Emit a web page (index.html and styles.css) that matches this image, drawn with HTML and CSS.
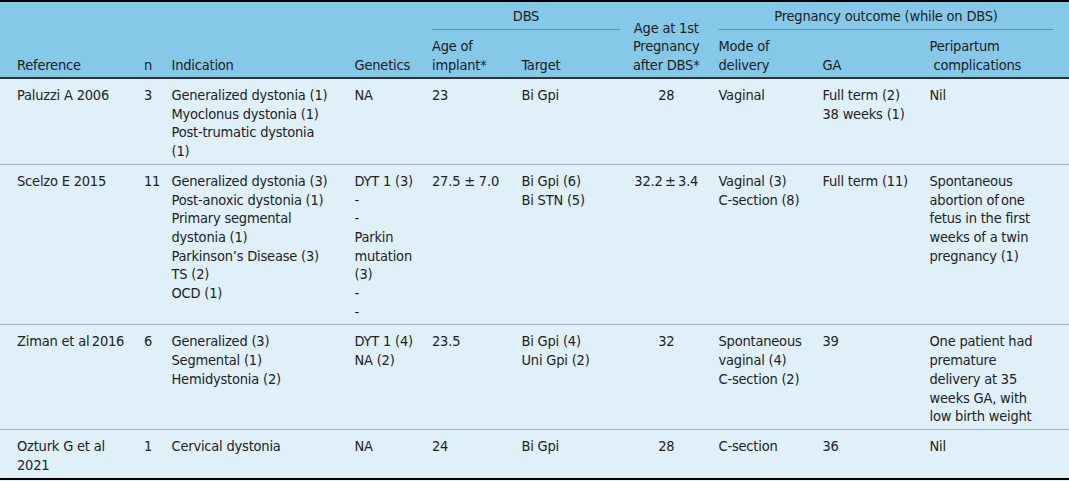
FILE: index.html
```html
<!DOCTYPE html>
<html lang="en">
<head>
<meta charset="utf-8">
<title>DBS and pregnancy</title>
<link rel="stylesheet" href="styles.css">
</head>
<body>
<table class="tbl">
  <colgroup>
    <col class="w-ref">
    <col class="w-n">
    <col class="w-ind">
    <col class="w-gen">
    <col class="w-age">
    <col class="w-tgt">
    <col class="w-preg">
    <col class="w-mode">
    <col class="w-ga">
    <col class="w-peri">
  </colgroup>
  <thead>
    <tr class="hrow-a">
      <th rowspan="2" class="c-ref">Reference</th>
      <th rowspan="2" class="c-n">n</th>
      <th rowspan="2" class="c-ind">Indication</th>
      <th rowspan="2" class="c-gen">Genetics</th>
      <th colspan="2" class="grp grp-dbs"><div class="grp-line">DBS</div></th>
      <th rowspan="2" class="c-preg">Age at 1st Pregnancy after DBS*</th>
      <th colspan="3" class="grp grp-po"><div class="grp-line">Pregnancy outcome (while on DBS)</div></th>
    </tr>
    <tr class="hrow-b">
      <th class="c-age">Age of implant*</th>
      <th class="c-tgt">Target</th>
      <th class="c-mode">Mode of delivery</th>
      <th class="c-ga">GA</th>
      <th class="c-peri">Peripartum<br>&nbsp;complications</th>
    </tr>
  </thead>
  <tbody>
    <tr>
      <td class="c-ref">Paluzzi A 2006</td>
      <td class="c-n">3</td>
      <td class="c-ind">Generalized dystonia (1)<br>Myoclonus dystonia (1)<br>Post-trumatic dystonia (1)</td>
      <td class="c-gen">NA</td>
      <td class="c-age">23</td>
      <td class="c-tgt">Bi Gpi</td>
      <td class="c-preg">28</td>
      <td class="c-mode">Vaginal</td>
      <td class="c-ga">Full term (2)<br>38 weeks (1)</td>
      <td class="c-peri">Nil</td>
    </tr>
    <tr>
      <td class="c-ref">Scelzo E 2015</td>
      <td class="c-n">11</td>
      <td class="c-ind">Generalized dystonia (3)<br>Post-anoxic dystonia (1)<br>Primary segmental dystonia (1)<br>Parkinson’s Disease (3)<br>TS (2)<br>OCD (1)</td>
      <td class="c-gen">DYT 1 (3)<br>-<br>-<br>Parkin mutation (3)<br>-<br>-</td>
      <td class="c-age">27.5 ± 7.0</td>
      <td class="c-tgt">Bi Gpi (6)<br>Bi STN (5)</td>
      <td class="c-preg">32.2&#8201;±&#8201;3.4</td>
      <td class="c-mode">Vaginal (3)<br>C-section (8)</td>
      <td class="c-ga">Full term (11)</td>
      <td class="c-peri">Spontaneous abortion of&#8201;one fetus in the first weeks of a twin pregnancy (1)</td>
    </tr>
    <tr>
      <td class="c-ref">Ziman et al&#8201;2016</td>
      <td class="c-n">6</td>
      <td class="c-ind">Generalized (3)<br>Segmental (1)<br>Hemidystonia (2)</td>
      <td class="c-gen">DYT 1 (4)<br>NA (2)</td>
      <td class="c-age">23.5</td>
      <td class="c-tgt">Bi Gpi (4)<br>Uni Gpi (2)</td>
      <td class="c-preg">32</td>
      <td class="c-mode">Spontaneous vaginal (4)<br>C-section (2)</td>
      <td class="c-ga">39</td>
      <td class="c-peri">One patient had premature delivery at 35 weeks GA, with low birth weight</td>
    </tr>
    <tr class="last">
      <td class="c-ref">Ozturk G et al 2021</td>
      <td class="c-n">1</td>
      <td class="c-ind">Cervical dystonia</td>
      <td class="c-gen">NA</td>
      <td class="c-age">24</td>
      <td class="c-tgt">Bi Gpi</td>
      <td class="c-preg">28</td>
      <td class="c-mode">C-section</td>
      <td class="c-ga">36</td>
      <td class="c-peri">Nil</td>
    </tr>
  </tbody>
</table>
</body>
</html>
```

FILE: styles.css
```css
html, body {
  margin: 0;
  padding: 0;
  background: #dff0f9;
}

body {
  font-family: "DejaVu Sans Condensed", "DejaVu Sans", "Liberation Sans", sans-serif;
  font-stretch: condensed;
  font-size: 14.5px;
  letter-spacing: -0.2px;
  line-height: 18.7px;
  color: #222;
}

.tbl {
  width: 1069px;
  table-layout: fixed;
  border-collapse: separate;
  border-spacing: 0;
  border-top: 2px solid #000;
  border-bottom: 2px solid #000;
}

.w-ref  { width: 144px; }
.w-n    { width: 27.5px; }
.w-ind  { width: 183px; }
.w-gen  { width: 77.5px; }
.w-age  { width: 89.5px; }
.w-tgt  { width: 106.5px; }
.w-preg { width: 90.5px; }
.w-mode { width: 104px; }
.w-ga   { width: 107px; }
.w-peri { width: 139.5px; }

th, td {
  padding: 0;
  text-align: left;
  font-weight: normal;
}

thead th {
  background: #86c8e8;
  color: #1c1c1c;
  vertical-align: bottom;
}

.hrow-a th {
  padding-top: 5px;
}

.hrow-a th[rowspan],
.hrow-b th {
  padding-bottom: 2.3px;
  border-bottom: 2px solid #333;
}

.hrow-b th {
  padding-top: 7.3px;
}

.grp {
  text-align: center;
}

.grp-dbs { padding-right: 8px; }
.grp-po  { padding-right: 15.6px; }

.grp-line {
  padding-bottom: 3.3px;
  border-bottom: 1px solid #5f93b0;
}

tbody td {
  vertical-align: top;
  padding-top: 7px;
  padding-bottom: 3px;
  border-bottom: 1px solid #a4afb5;
}

tbody tr.last td {
  border-bottom: 0;
  padding-bottom: 4px;
}

.c-ref  { padding-left: 17px; padding-right: 15px; }
.c-n    { padding-right: 4px; }
.c-ind  { padding-right: 24px; }
.c-gen  { padding-right: 10px; }
.c-age  { padding-right: 12px; }
.c-tgt  { padding-right: 8px; }
.c-preg { padding-right: 14px; text-align: center; }
.c-mode { padding-right: 10px; }
.c-ga   { padding-right: 10px; }
.c-peri { padding-right: 30px; }

thead th.c-preg { text-align: center; }
```
